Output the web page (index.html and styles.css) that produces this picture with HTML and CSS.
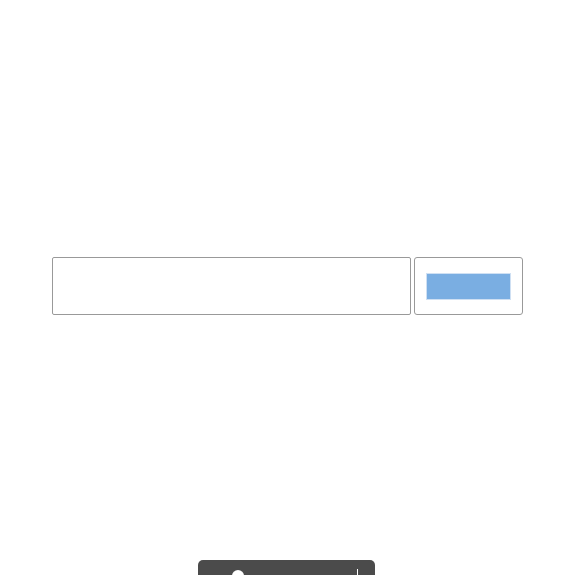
FILE: index.html
```html
<!DOCTYPE html>
<html>
<head>
<meta charset="utf-8">
<link rel="stylesheet" href="styles.css">
</head>
<body>
<main class="page">
  <div class="row">
    <div class="field"></div>
    <div class="action"><span class="btn"></span></div>
  </div>
  <div class="controls">
    <span class="thumb"></span>
    <span class="divider"></span>
  </div>
</main>
</body>
</html>
```
FILE: styles.css
```css
html, body {
  margin: 0;
  padding: 0;
  background: #fff;
  font-family: "Liberation Sans", Arial, sans-serif;
  overflow: hidden;
  height: 575px;
}
.page {
  padding-top: 257px;
}
.row {
  display: flex;
  gap: 3px;
  margin-left: 52px;
}
.field {
  box-sizing: border-box;
  width: 359px;
  height: 58px;
  border: 1px solid #999;
  border-radius: 2px;
}
.action {
  box-sizing: border-box;
  width: 109px;
  height: 58px;
  border: 1px solid #999;
  border-radius: 3px;
  padding: 15px 0 0 11px;
}
.btn {
  display: block;
  box-sizing: border-box;
  width: 85px;
  height: 27px;
  background: #7aaee2;
  border: 1px solid #cfe0f3;
}
.controls {
  margin-top: 245px;
  margin-left: 198px;
  width: 177px;
  height: 40px;
  background: #4b4b4b;
  border-radius: 5px;
  display: flex;
  align-items: flex-start;
  padding-top: 9px;
  box-sizing: border-box;
}
.thumb {
  width: 12px;
  height: 12px;
  border-radius: 50%;
  background: #fff;
  margin-left: 34px;
  margin-top: 1px;
}
.divider {
  width: 1px;
  height: 12px;
  background: #fff;
  margin-left: 113px;
}
```
